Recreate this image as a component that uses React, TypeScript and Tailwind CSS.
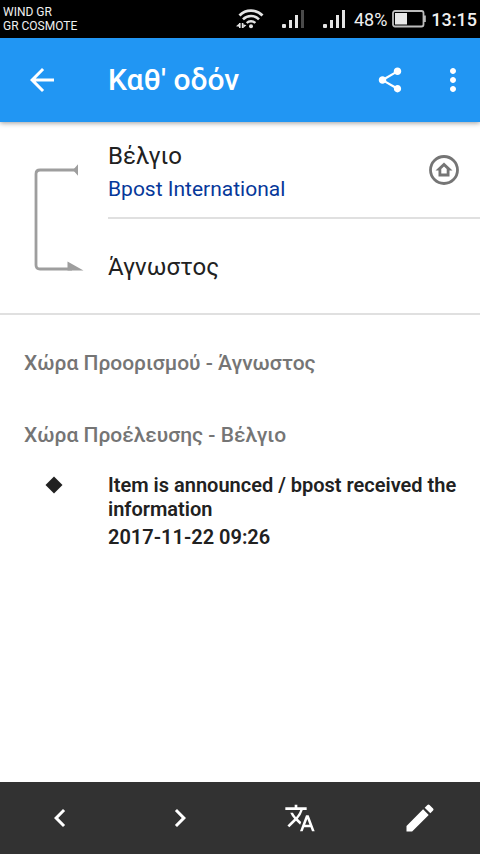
import React from "react";
import {
  MdArrowBack,
  MdChevronLeft,
  MdChevronRight,
  MdEdit,
  MdMoreVert,
  MdShare,
  MdTranslate,
} from "react-icons/md";

const events = [
  {
    text: "Item is announced / bpost received the information",
    time: "2017-11-22 09:26",
  },
];

const actions = [
  { label: "Previous", icon: <MdChevronLeft size={36} /> },
  { label: "Next", icon: <MdChevronRight size={36} /> },
  { label: "Translate", icon: <MdTranslate size={32} /> },
  { label: "Edit", icon: <MdEdit size={36} /> },
];

function WifiIcon() {
  return (
    <svg width="28" height="20" viewBox="0 0 28 20" fill="none" stroke="#e4e4e4">
      <path d="M3.5 6.5a16 16 0 0 1 23 0" strokeWidth="2.8" />
      <path d="M7 10.4a11.2 11.2 0 0 1 16 0" strokeWidth="2.6" />
      <path d="M10.7 14a6.2 6.2 0 0 1 8.6 0" strokeWidth="2.4" />
      <circle cx="15" cy="17.2" r="2" fill="#e4e4e4" stroke="none" />
      <path d="M3.8 14v5M6.6 14v5" strokeWidth="1.6" />
      <path d="M0 17.2L3.2 14.4V17.8ZM10.4 16.2L7.2 19V15.2Z" fill="#e4e4e4" stroke="none" />
    </svg>
  );
}

function SignalIcon({ weak = false }: { weak?: boolean }) {
  return (
    <svg width="22" height="18" viewBox="0 0 22 18" fill="#e4e4e4">
      <rect x="0" y="14" width="4" height="4" rx="1" />
      <rect x="7" y="10" width="3" height="8" />
      <rect x="13" y="5" width="3" height="13" />
      <rect x="19" y="0" width="3" height="18" fill={weak ? "#4a4a4a" : "#e4e4e4"} />
    </svg>
  );
}

function BatteryIcon() {
  return (
    <svg width="34" height="18" viewBox="0 0 34 18">
      <rect x="1" y="1" width="30.5" height="15.5" rx="2" fill="none" stroke="#bdbdbd" strokeWidth="1.8" />
      <rect x="3" y="3" width="12" height="11.5" fill="#e8e8e8" />
      <path d="M32 5.5h1.8v6.5H32z" fill="#bdbdbd" />
    </svg>
  );
}

function StatusBar() {
  return (
    <div className="flex h-[38px] items-center justify-between bg-black px-[3px] text-[#f0f0f0]">
      <div className="text-[12px] leading-[14px]">
        <p>WIND GR</p>
        <p>GR COSMOTE</p>
      </div>
      <div className="flex items-center text-[18px] leading-[24px]">
        <WifiIcon />
        <div className="ml-[18px] flex gap-[19px]">
          <SignalIcon weak />
          <SignalIcon />
        </div>
        <span className="ml-[9px] mr-[5px] pt-[2px]">48%</span>
        <BatteryIcon />
        <span className="ml-[5px] pt-[2px] font-medium">13:15</span>
      </div>
    </div>
  );
}

function RouteIcon() {
  return (
    <svg width="108" height="108" viewBox="0 0 108 108" className="self-center">
      <path
        d="M76 6H40Q36 6 36 10V101Q36 105 40 105H72"
        fill="none"
        stroke="#9e9e9e"
        strokeWidth="2.8"
      />
      <path d="M73 6L78 0.3V11.7ZM67.5 97.5L83.5 106.4H67.5Z" fill="#9e9e9e" />
    </svg>
  );
}

function OriginIcon() {
  return (
    <svg width="30" height="30" viewBox="0 0 30 30" fill="none" stroke="#757575">
      <circle cx="15" cy="15" r="13.5" strokeWidth="2.8" />
      <path
        d="M15 7.5L6.5 15.5H9.5V21.5H20.5V15.5H23.5ZM15 11.5L17.7 14V18.5H12.3V14Z"
        fill="#757575"
        fillRule="evenodd"
        stroke="none"
      />
    </svg>
  );
}

export default function App() {
  return (
    <div className="flex min-h-screen flex-col bg-white font-[Roboto,'Noto_Sans',sans-serif] text-[#212121]">
      <StatusBar />

      <header className="relative flex h-[84px] items-center bg-[#2196f3] text-white shadow-[0_1px_5px_rgba(0,0,0,0.4)]">
        <button aria-label="Back" className="flex w-[84px] justify-center">
          <MdArrowBack size={36} />
        </button>
        <h1 className="ml-6 flex-1 text-[30px] font-medium leading-[36px]">Καθ' οδόν</h1>
        <button aria-label="Share" className="flex w-[72px] justify-center">
          <MdShare size={30} />
        </button>
        <button aria-label="More options" className="flex w-[54px] justify-center">
          <MdMoreVert size={36} />
        </button>
      </header>

      <main className="flex-1">
        <section className="grid grid-cols-[108px_1fr] border-b-2 border-[#e0e0e0]">
          <RouteIcon />
          <div>
            <div className="flex h-[97px] items-center justify-between border-b-2 border-[#e0e0e0] pr-[21px]">
              <div className="pt-[6px]">
                <p className="text-[24px] leading-[32px]">Βέλγιο</p>
                <a href="#carrier" className="block text-[21px] leading-[34px] text-[#06389a]">
                  Bpost International
                </a>
              </div>
              <OriginIcon />
            </div>
            <p className="flex h-[94px] items-center pt-[2px] text-[24px] leading-[32px]">Άγνωστος</p>
          </div>
        </section>

        <section className="pl-6 pr-4 pt-9">
          <h2 className="text-[21px] font-medium leading-[24px] text-[#757575]">
            Χώρα Προορισμού - Άγνωστος
          </h2>
          <h2 className="mt-12 text-[21px] font-medium leading-[24px] text-[#757575]">
            Χώρα Προέλευσης - Βέλγιο
          </h2>
          <ul className="mt-[26px]">
            {events.map((event) => (
              <li key={event.time} className="grid grid-cols-[60px_1fr] gap-x-6">
                <svg width="60" height="24" viewBox="0 0 60 24">
                  <path d="M30 3.5L38.5 12L30 20.5L21.5 12Z" fill="#212121" />
                </svg>
                <div className="text-[20px] font-semibold leading-[24px]">
                  <p>{event.text}</p>
                  <p className="mt-1">{event.time}</p>
                </div>
              </li>
            ))}
          </ul>
        </section>
      </main>

      <nav className="grid h-[72px] grid-cols-4 bg-[#323232] text-white">
        {actions.map((action) => (
          <button key={action.label} aria-label={action.label} className="flex items-center justify-center">
            {action.icon}
          </button>
        ))}
      </nav>
    </div>
  );
}
